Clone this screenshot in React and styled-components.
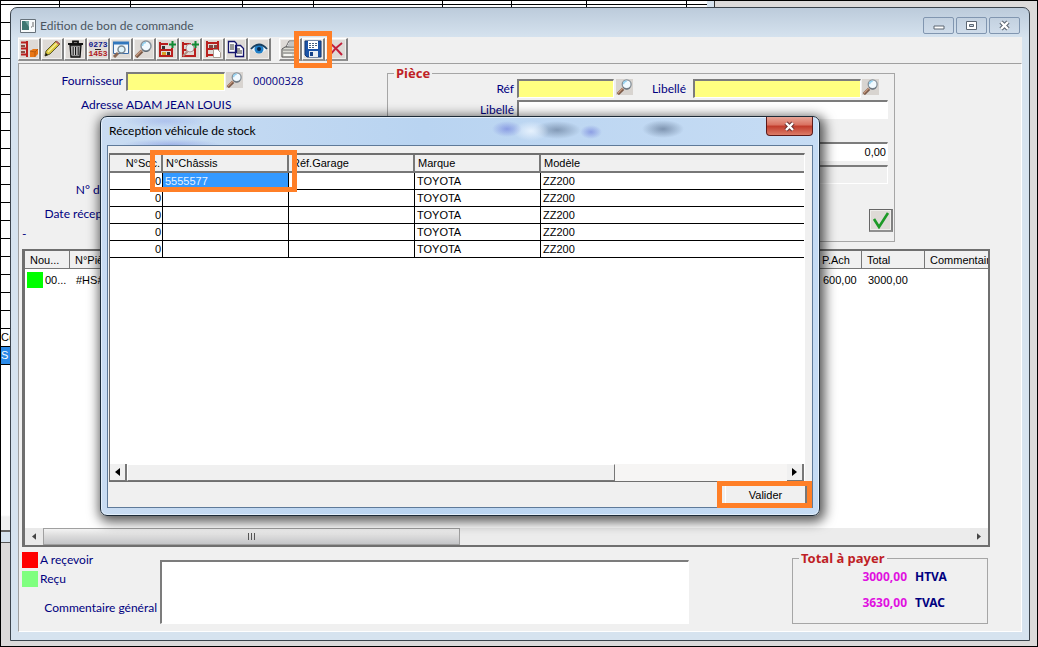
import React from "react";
import styled, { createGlobalStyle } from "styled-components";

const UI_FONT = `Lato, "Open Sans", sans-serif`;
const GRID_FONT = `"Liberation Sans", Arial, sans-serif`;

const GlobalStyle = createGlobalStyle`
  *, *::before, *::after {
    box-sizing: border-box;
  }
  body {
    margin: 0;
    background: #dcdada;
    font: 12px/16px ${UI_FONT};
    color: #000;
  }
  button, input, textarea {
    font: inherit;
    margin: 0;
    padding: 0;
  }
`;

const Desktop = styled.main`
  position: relative;
  display: grid;
  min-height: 100vh;
  padding: 6px 7px 5px 9px;
  border: 1px solid #000;
  overflow: hidden;
`;

/* ---- window lying behind ---- */

const BackWindow = styled.div`
  position: absolute;
  top: 0;
  left: 0;
  width: 714px;
  height: 542px;
  padding-right: 7px;
  background: #d6e3ef;
  border-right: 1px solid #333;
  border-bottom: 1px solid #555;
  font: 11px/17px ${GRID_FONT};
`;

const BackSheet = styled.div`
  height: 531px;
  background: linear-gradient(#fff 514px, #f0f0f0 516px);
  border-bottom: 2px solid #666;
`;

const BackRow = styled.div`
  display: grid;
  grid-template-columns: 59px 71px 112px 71px 129px 69px 75px 100px 1fr;
  height: ${props => (props.$short ? 4 : 18)}px;
  border-bottom: 1px solid #000;
  color: ${props => (props.$selected ? "#fff" : "#000")};
  background: ${props => (props.$selected ? "#2a8ae8" : "#fff")};

  span {
    border-right: 1px solid #000;
    white-space: nowrap;
    overflow: hidden;
  }
`;

/* ---- main window ---- */

const Window = styled.section`
  position: relative;
  display: flex;
  flex-direction: column;
  padding: 0 7px 8px 7px;
  background: linear-gradient(#bccbdb, #d6e3ef 30px);
  border: 1px solid #3b444d;
  border-radius: 7px 7px 0 0;
`;

const TitleBar = styled.header`
  display: flex;
  align-items: center;
  flex: none;
  height: 29px;
  padding: 6px 2px 0 2px;
  gap: 4px;

  h1 {
    flex: 1;
    margin: 0;
    font-size: 12px;
    font-weight: 400;
    color: #4a5560;
  }
`;

const CaptionButtons = styled.div`
  display: flex;
  gap: 2px;
`;

const CaptionButton = styled.button`
  display: grid;
  place-items: center;
  width: 31px;
  height: 17px;
  background: linear-gradient(#c3d1e0, #cfdcea);
  border: 1px solid #8196b0;
  border-radius: 2px;
`;

const Toolbar = styled.div`
  display: flex;
  flex: none;
  height: 26px;
  padding-top: 1px;
  background: #f0f0f0;
`;

const ToolGroup = styled.div`
  display: flex;
  margin-right: 8px;
`;

const ToolButton = styled.button`
  position: relative;
  display: grid;
  place-items: center;
  width: 23px;
  height: 23px;
  background: #dedad6;
  border: 1px solid #fff;
  border-right: 2px solid #808080;
  border-bottom: 2px solid #909090;
  box-shadow: inset 0 0 0 1px #efeeec;
`;

const Highlight = styled.span`
  position: absolute;
  inset: ${props => props.$inset};
  border: 5px solid #ff7f27;
  pointer-events: none;
  z-index: 2;
`;

const Pane = styled.div`
  display: flex;
  flex-direction: column;
  flex: 1;
  padding: 0 31px 7px 3px;
  background: #f0f0f0;
  border: 1px solid #a0a0a0;
  border-right-color: #fff;
  border-bottom-color: #fff;
  color: #00007f;
`;

const FormArea = styled.div`
  display: flex;
  flex: none;
  height: 178px;
  margin-bottom: 7px;
`;

const SupplierColumn = styled.div`
  display: flex;
  flex-direction: column;
  justify-content: space-between;
  width: 365px;
  padding-top: 5px;
`;

const FormLine = styled.div`
  display: grid;
  grid-template-columns: 101px 1fr;
  align-items: center;
  column-gap: 3px;
  height: 24px;

  > label,
  > span:first-child {
    text-align: right;
    white-space: nowrap;
  }
`;

const Dash = styled.p`
  margin: 0;
  height: 16px;
`;

const Inline = styled.div`
  display: flex;
  align-items: center;
  gap: 1px;
`;

const SupplierCode = styled.span`
  margin-left: 9px;
  font: 11px/16px "Open Sans", sans-serif;
`;

const TextField = styled.input`
  width: ${props => props.$width || "100%"};
  height: 19px;
  padding: 0 1px;
  background: ${props => props.$fill || "#fff"};
  border: 1px solid #fff;
  border-top: 2px solid #7c7c7c;
  border-left: 2px solid #7c7c7c;
  border-radius: 0;
  font: 11px/14px ${GRID_FONT};
  text-align: ${props => (props.$number ? "right" : "left")};
  min-width: 0;
`;

const LookupButton = styled.button`
  display: grid;
  flex: none;
  align-self: flex-start;
  width: 17px;
  height: 16px;
  background: #d8d4d0;
  border: 0;
`;

const GrowField = styled.div`
  display: flex;
  align-items: center;
  gap: 1px;
  flex: 1;
  min-width: 0;
`;

const GroupBox = styled.fieldset`
  flex: 0 1 ${props => props.$width};
  min-width: 0;
  margin: 0;
  padding: 0 6px 0 0;
  border: 1px solid #a6a6a6;

  legend {
    height: 12px;
    margin-left: 6px;
    padding: 0 2px;
    font: 700 13px/12px "Noto Sans", sans-serif;
    color: #bf1f26;
  }
`;

const PartBox = styled(GroupBox)`
  margin-top: 3px;
`;

const PartLine = styled.div`
  display: flex;
  align-items: center;
  gap: 2px;
  margin-bottom: 2px;
  padding-right: ${props => (props.$short ? 9 : 0)}px;
`;

const PartLabel = styled.label`
  flex: 0 0 ${props => props.$width};
  padding-right: ${props => props.$space || "1px"};
  text-align: right;
`;

const Amounts = styled.div`
  display: flex;
  flex-direction: column;
  align-items: flex-end;
  gap: 4px;
  margin-top: 23px;
`;

const AcceptButton = styled(ToolButton)`
  width: 24px;
  margin: 25px -5px 0 auto;
  border-top-color: #666;
  border-left-color: #666;
`;

const ListBox = styled.div`
  display: flex;
  flex-direction: column;
  flex: 1;
  background: #fff;
  border: 2px solid #6f6f6f;
  border-left-width: 3px;
  color: #000;
  font: 11px/16px ${GRID_FONT};
`;

const LinesTable = styled.table`
  width: 100%;
  table-layout: fixed;
  border-collapse: separate;
  border-spacing: 0;

  th {
    height: 18px;
    padding: 0 0 0 5px;
    background: #f0f0f0;
    border-right: 1px solid #777;
    border-bottom: 1px solid #777;
    font-weight: 400;
    text-align: left;
    white-space: nowrap;
    overflow: hidden;
  }
  th:last-child {
    border-right: 0;
  }
  td {
    height: 22px;
    padding: 0 0 0 6px;
    white-space: nowrap;
  }
  td:first-child {
    padding-left: 2px;
  }
`;

const StateCell = styled.div`
  display: flex;
  align-items: center;
  gap: 2px;
`;

const Swatch = styled.span`
  flex: none;
  width: 16px;
  height: 16px;
  background: ${props => props.color};
`;

const ScrollBar = styled.div`
  display: flex;
  align-items: stretch;
  flex: none;
  height: 17px;
  margin-top: auto;
  background: ${props => (props.$classic ? "#f6f5f4" : "#ececec")};
`;

const ScrollArrow = styled.button`
  display: grid;
  place-items: center;
  width: ${props => (props.$classic ? 17 : 18)}px;
  background: ${props => (props.$classic ? "#f0f0f0" : "#e9e9e9")};
  border: 0 solid #777;
  border-width: ${props => (props.$classic ? "0 2px 1px 0" : "0")};
`;

const ScrollTrack = styled.div`
  display: flex;
  flex: 1;
`;

const ScrollThumb = styled.div`
  display: grid;
  place-items: center;
  width: ${props => props.$size};
  background: ${props =>
    props.$classic ? "#f0f0f0" : "linear-gradient(#f3f3f3, #dcdcdc 45%, #c4c5c8)"};
  border: 1px solid #a0a0a0;
  border-color: ${props => (props.$classic ? "#fff #777 #777 #fff" : "#a0a0a0")};
`;

const BottomArea = styled.div`
  display: flex;
  flex: none;
  height: 77px;
  padding: 5px 2px 0 0;
`;

const StateColumn = styled.div`
  display: flex;
  flex-direction: column;
  gap: 3px;
  width: 135px;

  label {
    margin-top: 10px;
    text-align: right;
    white-space: nowrap;
  }
`;

const StateLegend = styled.div`
  display: flex;
  gap: 2px;
`;

const CommentBox = styled.textarea`
  flex: 1;
  min-width: 0;
  margin: 8px 103px 0 3px;
  background: #fff;
  border: 1px solid #fff;
  border-top: 2px solid #7c7c7c;
  border-left: 2px solid #7c7c7c;
  border-radius: 0;
  resize: none;
`;

const TotalLine = styled.p`
  display: flex;
  justify-content: flex-end;
  gap: 8px;
  height: 26px;
  margin: 0 33px 0 0;
  font: 700 12px/26px "Noto Sans", sans-serif;

  output {
    color: #e010e0;
  }
  span {
    width: 33px;
  }
`;

/* ---- dialog ---- */

const Dialog = styled.section`
  position: absolute;
  left: 99px;
  top: 115px;
  display: flex;
  flex-direction: column;
  width: 720px;
  height: 400px;
  padding: 0 6px 7px;
  background: linear-gradient(90deg, #c9dcf2, #b9d4f1 45%, #c6dcf4);
  border: 1px solid #1d2b38;
  border-radius: 7px;
  box-shadow: inset 0 0 0 1px #e3effb, 2px 3px 12px 3px rgba(0, 0, 0, 0.65);
`;

const DialogTitle = styled.header`
  display: flex;
  align-items: flex-start;
  justify-content: space-between;
  flex: none;
  height: 28px;
  background:
    radial-gradient(ellipse 42px 7px at 58px 4px, rgba(120, 140, 225, 0.3), transparent),
    radial-gradient(ellipse 50px 6px at 64px 28px, rgba(100, 120, 215, 0.4), transparent),
    radial-gradient(ellipse 15px 8px at 400px 12px, rgba(80, 90, 210, 0.45), transparent),
    radial-gradient(ellipse 18px 10px at 424px 14px, #e6f1fd, transparent),
    radial-gradient(ellipse 24px 9px at 450px 13px, rgba(60, 80, 110, 0.45), transparent),
    radial-gradient(ellipse 11px 7px at 484px 15px, rgba(80, 90, 210, 0.45), transparent),
    radial-gradient(ellipse 21px 9px at 556px 12px, rgba(60, 80, 110, 0.5), transparent);

  h2 {
    margin: 6px 0 0 2px;
    font-size: 12px;
    font-weight: 400;
  }
`;

const CloseButton = styled.button`
  display: grid;
  place-items: center;
  width: 47px;
  height: 19px;
  background: linear-gradient(#e8a597, #d9705f 45%, #c03a2a 50%, #dc7c68);
  border: 1px solid #5c1a1a;
  border-top: 0;
  border-radius: 0 0 4px 4px;
`;

const DialogBody = styled.div`
  display: flex;
  flex-direction: column;
  flex: 1;
  padding: 7px 7px 3px 1px;
  background: #f0f0f0;
  border: 1px solid #5f7a99;
`;

const Sheet = styled.div`
  display: flex;
  flex-direction: column;
  flex: 1;
  background: #fff;
  border: 1px solid #fff;
  border-top: 2px solid #6f6f6f;
  border-left: 1px solid #6f6f6f;
  border-bottom: 1px solid #6f6f6f;
`;

const StockTable = styled.table`
  width: 100%;
  table-layout: fixed;
  border-collapse: separate;
  border-spacing: 0;
  font: 11px/15px ${GRID_FONT};

  th,
  td {
    height: 17px;
    padding: 0 2px;
    border-right: 1px solid #000;
    border-bottom: 1px solid #000;
    text-align: left;
    white-space: nowrap;
  }
  th {
    position: relative;
    height: 18px;
    padding: 1px 3px 0;
    background: #f0f0f0;
    border-right: 2px solid #777;
    border-bottom: 2px solid #777;
    font-weight: 400;
  }
  tr > :first-child {
    padding-left: 1px;
    padding-right: 1px;
    text-align: right;
  }
  tr > :last-child {
    border-right: 0;
  }
`;

const StockCell = styled.td`
  background: ${props => (props.$selected ? "#3399ff" : "#fff")};
  color: ${props => (props.$selected ? "#e6f3ff" : "#000")};
`;

const ValidateButton = styled.button`
  position: relative;
  flex: none;
  width: 82px;
  height: 19px;
  margin: 3px -2px 0 auto;
  background: #f0f0f0;
  border: 1px solid #fff;
  border-right: 2px solid #777;
  border-bottom: 1px solid #999;
  font: 11px/16px ${GRID_FONT};
`;

/* ---- icons ---- */

const Icon = ({ children, size = 18 }) => (
  <svg width={size} height={size} viewBox="0 0 18 18" aria-hidden="true">
    {children}
  </svg>
);

const Lens = ({ x = 0, y = 0 }) => (
  <g transform={`translate(${x} ${y})`}>
    <path d="m1 17 6-6" stroke="#7b5a48" strokeWidth="3.5" />
    <path d="m1 16 6-6" stroke="#c79a80" strokeWidth="1.5" />
    <circle cx="11" cy="6" r="5" fill="#f1faff" stroke="#87919a" strokeWidth="1.5" />
    <path d="M7.500 6A3.500 3.500 0 0 1 11 2.500" stroke="#8fd0f0" strokeWidth="1.500" fill="none" />
    <path d="M7 9.500a5 5 0 0 0 8 0" stroke="#56616b" fill="none" />
  </g>
);

const Plus = () => (
  <path d="M14.500 1v7M11 4.500h7" stroke="#138a35" strokeWidth="2" />
);

const Shelf = () => (
  <path d="M2 2v15M14 8v9M2 4h8M2 10h12M2 16h12" stroke="#b9201e" strokeWidth="2" fill="none" />
);

const icons = {
  shelfBox: (
    <Icon>
      <path d="M7 1v16M1 2.500h6M1 8.500h6M1 14.500h6" stroke="#b9201e" strokeWidth="2" />
      <path d="M1 5h4v2H1zM1 11h4v2H1z" fill="#8e4b40" />
      <path d="m10 11 3-2h5v5l-3 3h-5z" fill="#e87513" />
      <path d="m10 11 5 1 3-3M15 12v5" stroke="#b95a0c" fill="none" />
    </Icon>
  ),
  pencil: (
    <Icon>
      <path d="m2 16 1-5L13 1l4 3L7 14z" fill="#d8c63c" stroke="#5d592c" />
      <path d="m5 12 9-9" stroke="#f8ef9a" strokeWidth="1.500" />
      <path d="m12 2 4 3 1-1-3-3z" fill="#b85f5f" />
      <path d="m2 16 1-3 2 2z" fill="#111" />
    </Icon>
  ),
  trash: (
    <Icon>
      <path d="M4 5h11l-1 12H5z" fill="#8f8f8f" stroke="#111" strokeWidth="1.300" />
      <path d="M2 4h15M7 3V1.500h5V3" stroke="#111" strokeWidth="1.800" fill="none" />
      <path d="M7 7v8M9.500 7v8M12 7v8" stroke="#111" />
      <path d="M6 7v8M8.500 7v8M11 7v8" stroke="#ddd" strokeWidth=".8" />
    </Icon>
  ),
  lensWindow: (
    <Icon>
      <path d="M1.500 2.500h15v11h-15z" fill="#f2f7fc" stroke="#3c6ca6" />
      <path d="M1 3h16" stroke="#3277bd" strokeWidth="3" />
      <path d="m2 17 4-4" stroke="#8b6854" strokeWidth="3" />
      <circle cx="9.500" cy="9.500" r="3.500" fill="#dff3fb" stroke="#7d8a94" strokeWidth="1.500" />
    </Icon>
  ),
  lens: (
    <Icon>
      <Lens />
    </Icon>
  ),
  shelfAdd: (
    <Icon>
      <Shelf />
      <path d="M4 6h3v3H4zM9 12h3v3H9z" fill="#333" />
      <path d="M4 12h4v3H4z" fill="#d7a327" />
      <Plus />
    </Icon>
  ),
  shelfLens: (
    <Icon>
      <Shelf />
      <path d="m2 16 5-5" stroke="#b08c80" strokeWidth="2" />
      <circle cx="9" cy="8" r="4" fill="#e4eef0" stroke="#b39292" />
      <Plus />
    </Icon>
  ),
  shelfPage: (
    <Icon>
      <path d="M3 1v16M14 1v16M3 3h11M3 9h11M3 15h11" stroke="#b9201e" strokeWidth="2" />
      <path d="M5 5h4v3H5zM10 5h3v3h-3z" fill="#7c4a44" />
      <path d="M9.500 9.500h4l3 3v5h-7z" fill="#fff" stroke="#a89e94" />
    </Icon>
  ),
  copy: (
    <Icon>
      <path d="M1.500 1.500h6l2 2v9h-8zM8.500 5.500h5l3 3v8h-8z" fill="#fff" stroke="#14146c" strokeWidth="1.300" />
      <path d="M3 5h4M3 7h4M3 9h4M10 9h3M10 11h5M10 13h5" stroke="#333" />
    </Icon>
  ),
  eye: (
    <Icon>
      <path d="M1 9q8-8 16 0-8 8-16 0" fill="#e8f3fb" />
      <circle cx="9" cy="9" r="4.500" fill="#207fc7" />
      <circle cx="9" cy="9" r="2" fill="#06264c" />
      <path d="M1 9q8-9 16 0" stroke="#173f60" strokeWidth="1.800" fill="none" />
    </Icon>
  ),
  printer: (
    <Icon>
      <path d="m5 7 3-6h9l-3 7z" fill="#fff" stroke="#666" />
      <path d="M8 3h6M7 5h6" stroke="#888" />
      <path d="m1 9 3-2h13v6l-3 4H1z" fill="#dcdcd4" stroke="#555" />
      <path d="M2 10h12M2 13h12l3-3" stroke="#777" fill="none" />
      <path d="M3 14h8v2H3z" fill="#f6f6f2" />
    </Icon>
  ),
  save: (
    <Icon>
      <path d="M1 1h16v16H3l-2-2z" fill="#1c54a8" stroke="#113878" />
      <path d="M4 1h10v8H4z" fill="#fff" />
      <path d="M5 3.500h8M5 5.500h8M5 7.500h6" stroke="#49627f" strokeDasharray="2 1" />
      <path d="M5 11h9v6H5z" fill="#e9eef4" />
      <path d="M6 12h3v4H6z" fill="#123f87" />
    </Icon>
  ),
  cancel: (
    <Icon>
      <path d="M3 3q6 5 12 12M15 3Q8 8 3 15" stroke="#c31f3a" strokeWidth="2" fill="none" />
    </Icon>
  )
};

const NumberMark = styled.span`
  display: grid;
  justify-items: center;
  font: 700 8px/8px "Liberation Mono", monospace;
  color: #111a8c;

  i {
    width: 6px;
    height: 1px;
    background: #222;
  }
  span {
    color: #b01822;
  }
`;

const mainTools = [
  ["Stock", icons.shelfBox],
  ["Modifier", icons.pencil],
  ["Supprimer", icons.trash],
  [
    "Numéros",
    <NumberMark>
      0273
      <i />
      <span>1453</span>
    </NumberMark>
  ],
  ["Rechercher fenêtre", icons.lensWindow],
  ["Rechercher", icons.lens],
  ["Ajouter", icons.shelfAdd],
  ["Rechercher stock", icons.shelfLens],
  ["Fiche", icons.shelfPage],
  ["Copier", icons.copy],
  ["Voir", icons.eye]
];

const Arrow = ({ right, classic }) => (
  <svg
    width={classic ? 5 : 4}
    height={classic ? 8 : 7}
    viewBox="0 0 5 8"
    aria-hidden="true"
  >
    <path d={right ? "M0 0v8l5-4z" : "M5 0v8L0 4z"} fill={classic ? "#000" : "#444"} />
  </svg>
);

const CaptionCross = ({ color, outline }) => (
  <svg width="13" height="11" viewBox="0 0 13 11" aria-hidden="true">
    <path d="m3 2 7 7M10 2 3 9" stroke={outline} strokeWidth="4.500" />
    <path d="m3 2 7 7M10 2 3 9" stroke={color} strokeWidth="2.400" />
  </svg>
);

const HorizontalScroll = ({ classic, size, children }) => (
  <ScrollBar $classic={classic}>
    <ScrollArrow $classic={classic} aria-label="Gauche">
      <Arrow classic={classic} />
    </ScrollArrow>
    <ScrollTrack>
      <ScrollThumb $classic={classic} $size={size}>
        {children}
      </ScrollThumb>
    </ScrollTrack>
    <ScrollArrow $classic={classic} aria-label="Droite">
      <Arrow right classic={classic} />
    </ScrollArrow>
  </ScrollBar>
);

const Lookup = ({ label }) => (
  <LookupButton aria-label={label}>
    <Icon size={16}>
      <Lens x={1} />
    </Icon>
  </LookupButton>
);

const backRows = Array.from({ length: 21 }, (_, i) => i);
const backText = { 19: "C(", 20: "S" };

const stock = [
  { soc: 0, chassis: "5555577", marque: "TOYOTA", modele: "ZZ200" },
  { soc: 0, chassis: "", marque: "TOYOTA", modele: "ZZ200" },
  { soc: 0, chassis: "", marque: "TOYOTA", modele: "ZZ200" },
  { soc: 0, chassis: "", marque: "TOYOTA", modele: "ZZ200" },
  { soc: 0, chassis: "", marque: "TOYOTA", modele: "ZZ200" }
];

const Background = () => (
  <BackWindow>
    <BackSheet>
      {backRows.map(i => (
        <BackRow key={i} $short={i === 0} $selected={i === 20}>
          <span>{backText[i]}</span>
          <span />
          <span />
          <span />
          <span />
          <span />
          <span />
          <span />
        </BackRow>
      ))}
    </BackSheet>
  </BackWindow>
);

const SupplierForm = () => (
  <SupplierColumn>
    <div>
      <FormLine>
        <label htmlFor="fournisseur">Fournisseur</label>
        <Inline>
          <TextField id="fournisseur" $width="99px" $fill="#ffff80" />
          <Lookup label="Chercher un fournisseur" />
          <SupplierCode>00000328</SupplierCode>
        </Inline>
      </FormLine>
      <FormLine>
        <span>Adresse</span>
        <span>ADAM JEAN LOUIS</span>
      </FormLine>
    </div>
    <div>
      <FormLine>
        <span>N° de BL</span>
      </FormLine>
      <FormLine>
        <span>Date réception</span>
      </FormLine>
      <Dash>-</Dash>
    </div>
  </SupplierColumn>
);

const PartForm = () => (
  <PartBox $width="508px">
    <legend>Pièce</legend>
    <PartLine $short>
      <PartLabel $width="127px" htmlFor="ref">
        Réf
      </PartLabel>
      <TextField id="ref" $width="97px" $fill="#ffff80" />
      <Lookup label="Chercher une référence" />
      <PartLabel $width="56px" $space="5px" htmlFor="libelle">
        Libellé
      </PartLabel>
      <GrowField>
        <TextField id="libelle" $fill="#ffff80" />
        <Lookup label="Chercher un libellé" />
      </GrowField>
    </PartLine>
    <PartLine>
      <PartLabel $width="127px" htmlFor="libelle2">
        Libellé
      </PartLabel>
      <TextField id="libelle2" />
    </PartLine>
    <Amounts>
      <TextField $width="148px" $number defaultValue="0,00" aria-label="Prix" />
      <TextField $width="148px" $number $fill="#f0f0f0" readOnly aria-label="Total" />
    </Amounts>
    <AcceptButton aria-label="Accepter">
      <Icon>
        <path d="m2 8 5 8L16 2" stroke="#1d9a27" strokeWidth="2.600" fill="none" />
      </Icon>
    </AcceptButton>
  </PartBox>
);

const OrderLines = () => (
  <ListBox>
    <LinesTable>
      <colgroup>
        <col width="45" />
        <col />
        <col width="45" />
        <col width="63" />
        <col width="63" />
      </colgroup>
      <thead>
        <tr>
          <th>Nou...</th>
          <th>N°Pièce</th>
          <th>P.Ach</th>
          <th>Total</th>
          <th>Commentaire</th>
        </tr>
      </thead>
      <tbody>
        <tr>
          <td>
            <StateCell>
              <Swatch color="#00ff00" />
              00...
            </StateCell>
          </td>
          <td>#HS#</td>
          <td>600,00</td>
          <td>3000,00</td>
          <td />
        </tr>
      </tbody>
    </LinesTable>
    <HorizontalScroll size="45%">
      <svg width="9" height="7" viewBox="0 0 9 7" aria-hidden="true">
        <path d="M1.500 0v7M4.500 0v7M7.500 0v7" stroke="#555" />
      </svg>
    </HorizontalScroll>
  </ListBox>
);

const Summary = () => (
  <BottomArea>
    <StateColumn>
      <StateLegend>
        <Swatch color="#ff0000" />
        A reçevoir
      </StateLegend>
      <StateLegend>
        <Swatch color="#80ff80" />
        Reçu
      </StateLegend>
      <label htmlFor="commentaire">Commentaire général</label>
    </StateColumn>
    <CommentBox id="commentaire" />
    <GroupBox $width="196px">
      <legend>Total à payer</legend>
      <TotalLine>
        <output>3000,00</output>
        <span>HTVA</span>
      </TotalLine>
      <TotalLine>
        <output>3630,00</output>
        <span>TVAC</span>
      </TotalLine>
    </GroupBox>
  </BottomArea>
);

const StockDialog = () => (
  <Dialog role="dialog" aria-labelledby="stock-title">
    <DialogTitle>
      <h2 id="stock-title">Réception véhicule de stock</h2>
      <CloseButton aria-label="Fermer">
        <CaptionCross color="#fff" outline="#6d3434" />
      </CloseButton>
    </DialogTitle>
    <DialogBody>
      <Sheet>
        <StockTable>
          <colgroup>
            <col width="53" />
            <col width="126" />
            <col width="126" />
            <col width="126" />
            <col />
          </colgroup>
          <thead>
            <tr>
              <th>N°Soc.</th>
              <th>
                N°Châssis
                <Highlight $inset="-5px -10px -21px -13px" />
              </th>
              <th>Réf.Garage</th>
              <th>Marque</th>
              <th>Modèle</th>
            </tr>
          </thead>
          <tbody>
            {stock.map((row, i) => (
              <tr key={i}>
                <StockCell>{row.soc}</StockCell>
                <StockCell $selected={i === 0}>{row.chassis}</StockCell>
                <StockCell />
                <StockCell>{row.marque}</StockCell>
                <StockCell>{row.modele}</StockCell>
              </tr>
            ))}
          </tbody>
        </StockTable>
        <HorizontalScroll classic size="74%" />
      </Sheet>
      <ValidateButton>
        Valider
        <Highlight $inset="-5px -7px -5px -9px" />
      </ValidateButton>
    </DialogBody>
  </Dialog>
);

const App = () => (
  <>
    <GlobalStyle />
    <Desktop>
      <Background />
      <Window>
        <TitleBar>
          <svg width="16" height="14" viewBox="0 0 16 14" aria-hidden="true">
            <path d="M.5.5h15v13H.5z" fill="#f7fafb" stroke="#66717a" />
            <path d="M2 2h7v9H2z" fill="#3e7771" />
            <path d="M5 2h4v6z" fill="#77a8a2" />
            <path d="M11 8h1M13 3v5" stroke="#666" />
          </svg>
          <h1>Edition de bon de commande</h1>
          <CaptionButtons>
            <CaptionButton aria-label="Réduire">
              <svg width="12" height="9" viewBox="0 0 12 9" aria-hidden="true">
                <path d="M1 5h10v3H1z" fill="#fff" stroke="#5c6672" />
              </svg>
            </CaptionButton>
            <CaptionButton aria-label="Agrandir">
              <svg width="11" height="9" viewBox="0 0 11 9" aria-hidden="true">
                <path d="M.5.5h10v8H.5z" fill="#fff" stroke="#5c6672" />
                <path d="M3.500 3.500h4v2h-4z" fill="#c8d5e2" stroke="#5c6672" />
              </svg>
            </CaptionButton>
            <CaptionButton aria-label="Fermer la fenêtre">
              <CaptionCross color="#fff" outline="#5c6672" />
            </CaptionButton>
          </CaptionButtons>
        </TitleBar>
        <Toolbar>
          <ToolGroup>
            {mainTools.map(([label, icon]) => (
              <ToolButton key={label} aria-label={label}>
                {icon}
              </ToolButton>
            ))}
          </ToolGroup>
          <ToolGroup>
            <ToolButton aria-label="Imprimer">{icons.printer}</ToolButton>
            <ToolButton aria-label="Enregistrer">
              {icons.save}
              <Highlight $inset="-8px -9px -9px -9px" />
            </ToolButton>
            <ToolButton aria-label="Annuler">{icons.cancel}</ToolButton>
          </ToolGroup>
        </Toolbar>
        <Pane>
          <FormArea>
            <SupplierForm />
            <PartForm />
          </FormArea>
          <OrderLines />
          <Summary />
        </Pane>
      </Window>
      <StockDialog />
    </Desktop>
  </>
);

export default App;
